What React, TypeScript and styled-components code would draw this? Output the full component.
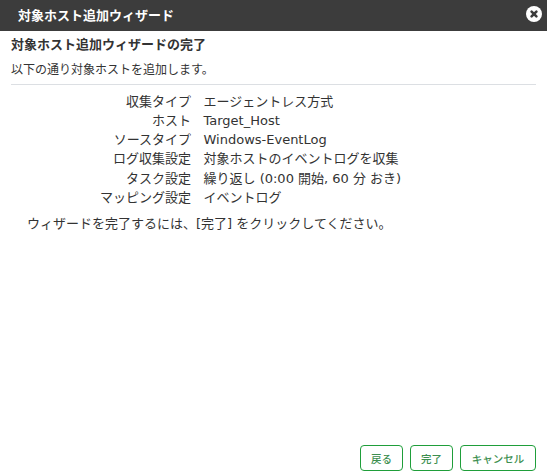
import React from 'react';
import styled, { createGlobalStyle } from 'styled-components';

const GlobalStyle = createGlobalStyle`
	html,
	body {
		margin: 0;
		padding: 0;
		background: #fff;
	}
	body {
		font-family: 'DejaVu Sans', 'Noto Sans CJK JP', sans-serif;
		color: #333;
	}
`;

const rows = [
	['収集タイプ', 'エージェントレス方式'],
	['ホスト', 'Target_Host'],
	['ソースタイプ', 'Windows-EventLog'],
	['ログ収集設定', '対象ホストのイベントログを収集'],
	['タスク設定', '繰り返し (0:00 開始, 60 分 おき)'],
	['マッピング設定', 'イベントログ'],
];

const App = () => {
	return (
		<>
			<GlobalStyle />
			<Dialog>
				<TitleBar>
					<Title>対象ホスト追加ウィザード</Title>
					<CloseIcon viewBox='0 0 16 16' aria-hidden='true'>
						<circle cx='8' cy='8' r='8' fill='#fff' />
						<path d='M5.6 5.6 L10.4 10.4 M10.4 5.6 L5.6 10.4' stroke='#3c3c3c' strokeWidth='2.6' strokeLinecap='round' />
					</CloseIcon>
				</TitleBar>
				<Body>
					<Heading>対象ホスト追加ウィザードの完了</Heading>
					<Lead>以下の通り対象ホストを追加します。</Lead>
					<Divider />
					<Summary>
						{rows.map(([label, value]) => (
							<React.Fragment key={label}>
								<Label>{label}</Label>
								<Value>{value}</Value>
							</React.Fragment>
						))}
					</Summary>
					<Hint>ウィザードを完了するには、[完了] をクリックしてください。</Hint>
				</Body>
				<Footer>
					<Button>戻る</Button>
					<Button>完了</Button>
					<Button $wide>キャンセル</Button>
				</Footer>
			</Dialog>
		</>
	);
};

const Dialog = styled.div`
	display: flex;
	flex-direction: column;
	width: 547px;
	height: 476px;
	overflow: hidden;
`;

const TitleBar = styled.div`
	display: flex;
	align-items: flex-start;
	justify-content: space-between;
	flex: none;
	box-sizing: border-box;
	height: 31px;
	padding: 6px 4px 0 18px;
	background: #3c3c3c;
`;

const Title = styled.div`
	color: #fff;
	font-size: 13px;
	font-weight: 700;
	line-height: 20px;
`;

const CloseIcon = styled.svg`
	width: 16px;
	height: 16px;
	margin-right: 1px;
`;

const Body = styled.div`
	flex: 1;
	padding: 4px 11px 0;
`;

const Heading = styled.div`
	font-size: 13px;
	font-weight: 700;
	line-height: 20px;
`;

const Lead = styled.div`
	margin-top: 6px;
	font-size: 12px;
	line-height: 18px;
`;

const Divider = styled.hr`
	margin: 5px 0 0;
	border: 0;
	border-top: 1px solid #dcdfe3;
`;

const Summary = styled.div`
	display: grid;
	grid-template-columns: 180px 1fr;
	grid-auto-rows: 19.3px;
	column-gap: 12.5px;
	margin-top: 6.5px;
	font-size: 13px;
	line-height: 19.3px;
`;

const Label = styled.div`
	text-align: right;
`;

const Value = styled.div`
	white-space: nowrap;
`;

const Hint = styled.div`
	margin: 6.5px 0 0 16px;
	font-size: 13px;
	line-height: 20px;
`;

const Footer = styled.div`
	display: flex;
	justify-content: flex-end;
	gap: 7px;
	flex: none;
	padding: 0 11px 5px;
`;

const Button = styled.button<{ $wide?: boolean }>`
	box-sizing: border-box;
	width: ${({ $wide }) => ($wide ? '76px' : '43px')};
	height: 26px;
	padding: 0;
	border: 1px solid #1f9e3a;
	border-radius: 4px;
	background: #fff;
	color: #3d8f50;
	font-family: inherit;
	font-size: 10.5px;
	font-weight: 500;
`;

export default App;
